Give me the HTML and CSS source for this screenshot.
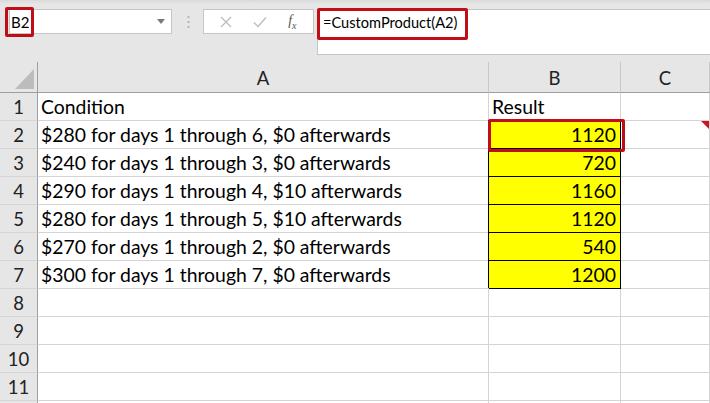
FILE: index.html
```html
<html>
<head>
	<title>CustomProduct</title>
	<meta http-equiv="content-type" content="text/html;charset=utf-8">
	<link rel="stylesheet" href="styles.css">
</head>
<body>
	<!-- 编辑栏 -->
	<div class="toolbar">
		<div class="namebox">
			<span>B2</span>
			<svg class="drop" width="8" height="5" viewBox="0 0 8 5"><path d="M0 0H8L4 5Z" fill="#7a7a7a"/></svg>
		</div>
		<svg class="dots" width="3" height="12" viewBox="0 0 3 12">
			<rect x="0.5" y="0" width="2" height="2" fill="#b5b5b5"/>
			<rect x="0.5" y="5" width="2" height="2" fill="#b5b5b5"/>
			<rect x="0.5" y="10" width="2" height="2" fill="#b5b5b5"/>
		</svg>
		<div class="fbtns">
			<svg width="12" height="12" viewBox="0 0 12 12"><path d="M1 1L11 11M11 1L1 11" stroke="#bdbdbd" stroke-width="1.4"/></svg>
			<svg width="14" height="12" viewBox="0 0 14 12"><path d="M1 6.5L5 10.5L13 1.5" stroke="#bdbdbd" stroke-width="1.4" fill="none"/></svg>
			<span class="fx">f<sub>x</sub></span>
		</div>
		<div class="formula">=CustomProduct(A2)</div>
		<div class="mark mark-name"></div>
		<div class="mark mark-formula"></div>
	</div>
	<!-- 表格区域 -->
	<div class="sheet">
		<div class="hd corner"><div class="tri"></div></div>
		<div class="hd col">A</div>
		<div class="hd col">B</div>
		<div class="hd col">C</div>

		<div class="hd row">1</div><div class="cell">Condition</div><div class="cell">Result</div><div class="cell"></div>
		<div class="hd row">2</div><div class="cell">$280 for days 1 through 6, $0 afterwards</div><div class="cell num">1120</div><div class="cell note"></div>
		<div class="hd row">3</div><div class="cell">$240 for days 1 through 3, $0 afterwards</div><div class="cell num">720</div><div class="cell"></div>
		<div class="hd row">4</div><div class="cell">$290 for days 1 through 4, $10 afterwards</div><div class="cell num">1160</div><div class="cell"></div>
		<div class="hd row">5</div><div class="cell">$280 for days 1 through 5, $10 afterwards</div><div class="cell num">1120</div><div class="cell"></div>
		<div class="hd row">6</div><div class="cell">$270 for days 1 through 2, $0 afterwards</div><div class="cell num">540</div><div class="cell"></div>
		<div class="hd row">7</div><div class="cell">$300 for days 1 through 7, $0 afterwards</div><div class="cell num">1200</div><div class="cell"></div>
		<div class="hd row">8</div><div class="cell"></div><div class="cell"></div><div class="cell"></div>
		<div class="hd row">9</div><div class="cell"></div><div class="cell"></div><div class="cell"></div>
		<div class="hd row">10</div><div class="cell"></div><div class="cell"></div><div class="cell"></div>
		<div class="hd row">11</div><div class="cell"></div><div class="cell"></div><div class="cell"></div>
		<div class="hd row"></div><div class="cell"></div><div class="cell"></div><div class="cell"></div>

		<div class="mark mark-cell"></div>
	</div>
</body>
</html>
```

FILE: styles.css
```css
body {
	margin: 0;
	width: 710px;
	height: 403px;
	overflow: hidden;
	background: #fff;
	font-family: "Lato", "Liberation Sans", sans-serif;
	color: #000;
}
.toolbar {
	position: relative;
	height: 62px;
	display: flex;
	align-items: flex-start;
	padding-top: 9px;
	box-sizing: border-box;
	background: linear-gradient(#d9d9d9, #e6e6e6 4px);
}
.namebox {
	margin-left: 9px;
	width: 163px;
	height: 25px;
	box-sizing: border-box;
	background: #fff;
	border: 1px solid #c6c6c6;
	display: flex;
	align-items: center;
	justify-content: space-between;
	padding: 0 6px 0 1px;
	font-size: 15px;
}
.dots {
	margin: 7px 0 0 15px;
}
.fbtns {
	margin-left: 13px;
	width: 111px;
	height: 25px;
	box-sizing: border-box;
	background: #fff;
	border: 1px solid #c6c6c6;
	display: flex;
	align-items: center;
	justify-content: space-around;
	padding: 0 6px;
}
.fx {
	font-family: "Liberation Serif", serif;
	font-style: italic;
	font-size: 14px;
	color: #555;
}
.fx sub {
	font-size: 10px;
}
.formula {
	margin-left: 3px;
	flex: 1;
	height: 46px;
	box-sizing: border-box;
	background: #fff;
	border: 1px solid #c6c6c6;
	border-right: none;
	padding: 4px 0 0 5px;
	font-size: 14.6px;
}
.mark {
	position: absolute;
	border: 3px solid #c00d17;
	border-radius: 2px;
	box-sizing: border-box;
}
.mark-name {
	left: 5px;
	top: 7px;
	width: 29px;
	height: 30px;
}
.mark-formula {
	left: 317px;
	top: 8px;
	width: 151px;
	height: 32px;
}
.mark-cell {
	left: 488px;
	top: 57px;
	width: 137px;
	height: 33px;
}
.sheet {
	position: relative;
	display: grid;
	grid-template-columns: 38px 451px 132px 89px;
	grid-template-rows: 31px;
	grid-auto-rows: 28px;
	background: #fff;
}
.hd {
	background: #e6e6e6;
	color: #222;
	font-size: 18.5px;
	display: flex;
	align-items: center;
	justify-content: center;
	box-sizing: border-box;
}
.col {
	border-right: 1px solid #c8c8c8;
	border-bottom: 1px solid #9e9e9e;
	padding-top: 2px;
}
.corner {
	border-right: 1px solid #9e9e9e;
	border-bottom: 1px solid #9e9e9e;
	position: relative;
}
.tri {
	position: absolute;
	left: 15px;
	top: 7px;
	width: 19px;
	height: 20px;
	background: #bcbcbc;
	clip-path: polygon(100% 0, 100% 100%, 0 100%);
}
.row {
	border-right: 1px solid #9e9e9e;
	border-bottom: 1px solid #d4d4d4;
}
.cell {
	border-right: 1px solid #d4d4d4;
	border-bottom: 1px solid #d4d4d4;
	box-sizing: border-box;
	font-size: 19.4px;
	line-height: 28px;
	padding: 0 4px 0 3px;
	white-space: nowrap;
	overflow: hidden;
}
.num {
	background: #ffff00;
	text-align: right;
	border-right-color: #000;
	border-bottom-color: #000;
	box-shadow: -1px -1px 0 #000;
}
.note {
	position: relative;
	overflow: visible;
}
.note::after {
	content: "";
	position: absolute;
	right: 0;
	top: 0;
	width: 8px;
	height: 8px;
	background: #d0101c;
	clip-path: polygon(0 0, 100% 0, 100% 100%);
}
```
